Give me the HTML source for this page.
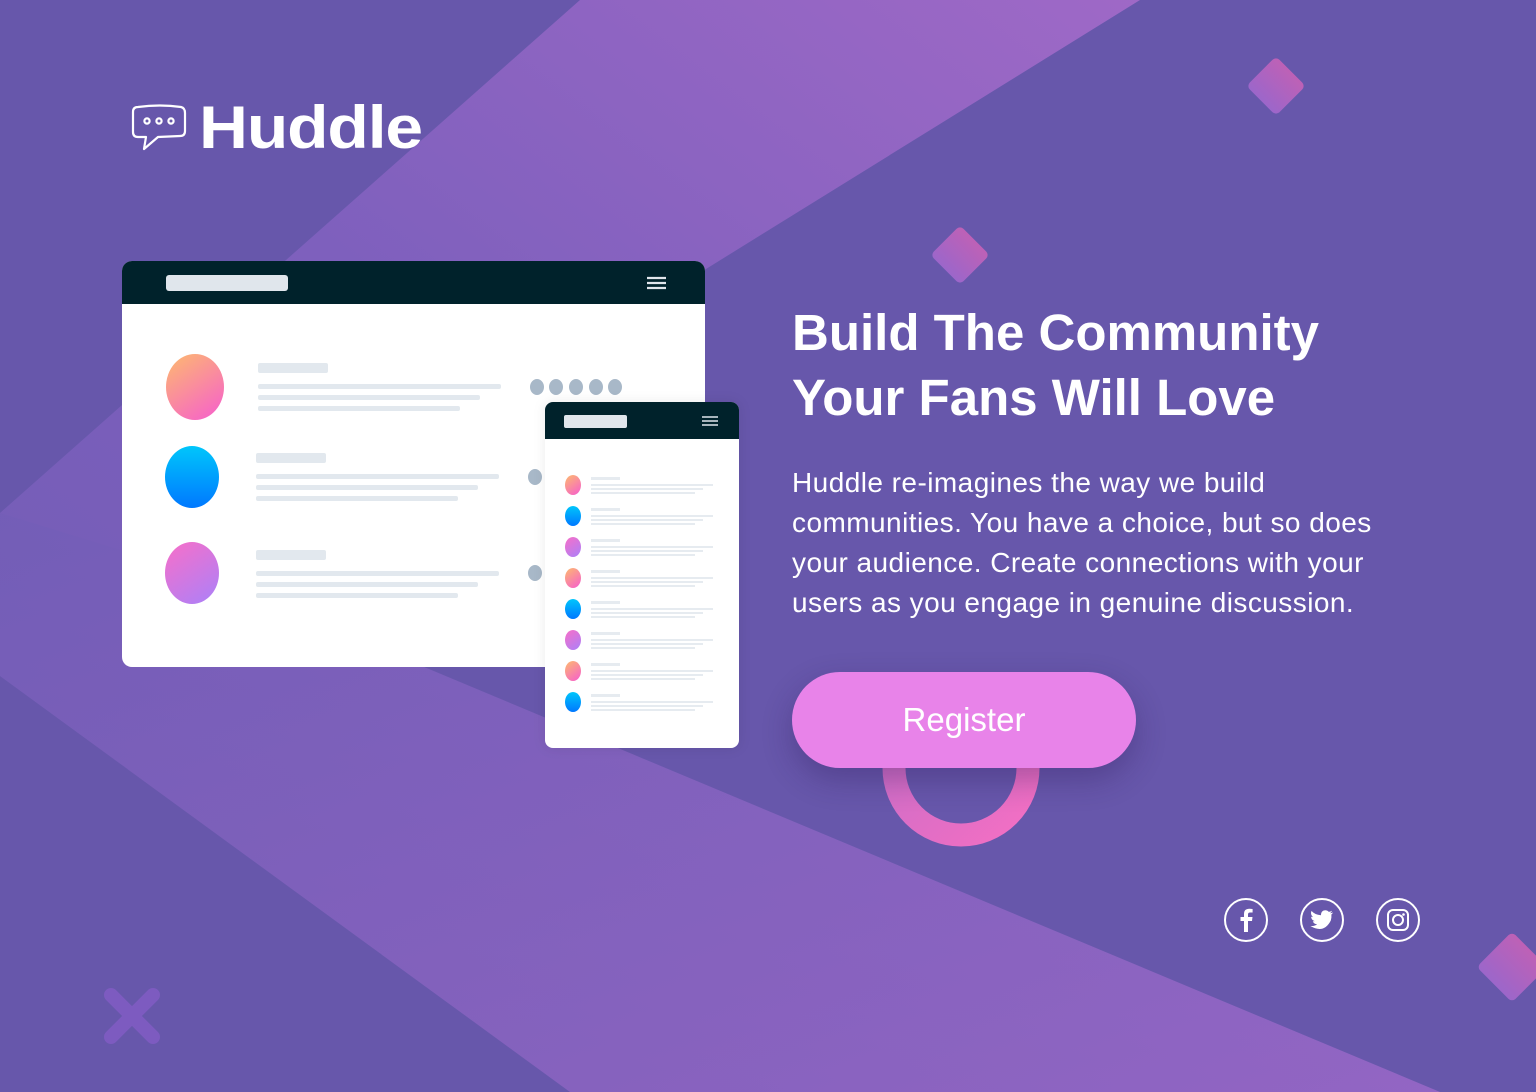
<!DOCTYPE html>
<html><head><meta charset="utf-8"><style>
html,body{margin:0;padding:0;width:1536px;height:1092px;overflow:hidden;background:#6757AB;font-family:"Liberation Sans",sans-serif;}
.abs{position:absolute;}
h1{position:absolute;left:792px;top:300px;margin:0;color:#fff;font-size:51px;line-height:65px;font-weight:bold;letter-spacing:0px;}
p{position:absolute;left:792px;top:463px;width:620px;margin:0;color:#fff;font-size:28px;line-height:40px;letter-spacing:0.45px;}
.btn{position:absolute;left:792px;top:672px;width:344px;height:96px;border-radius:48px;background:#E883E9;color:#fff;font-size:33px;line-height:96px;text-align:center;box-shadow:0 12px 30px rgba(40,20,80,.3);}
</style></head><body>
<svg class="abs" style="left:0;top:0" width="1536" height="1092">
<defs>
<linearGradient id="bg" x1="0" y1="1" x2="1" y2="0">
<stop offset="0" stop-color="#6E5BB3"/><stop offset="0.5" stop-color="#7E60BD"/><stop offset="1" stop-color="#A76BC9"/></linearGradient>
<linearGradient id="bg2" x1="0" y1="0" x2="1" y2="1">
<stop offset="0" stop-color="#715DB6"/><stop offset="1" stop-color="#A069C8"/></linearGradient>
<linearGradient id="dm" x1="0" y1="0" x2="0" y2="1"><stop offset="0" stop-color="#BE61B6"/><stop offset="1" stop-color="#9C66CA"/></linearGradient>
<linearGradient id="rg" x1="0" y1="0" x2="1" y2="1"><stop offset="0" stop-color="#C56DC8"/><stop offset="1" stop-color="#F46FC3"/></linearGradient>
<linearGradient id="a1" x1="0" y1="0" x2="0.6" y2="1"><stop offset="0" stop-color="#FDBA6E"/><stop offset="1" stop-color="#F76BC0"/></linearGradient>
<linearGradient id="a2" x1="0" y1="0" x2="0" y2="1"><stop offset="0" stop-color="#00C6FB"/><stop offset="1" stop-color="#0078FF"/></linearGradient>
<linearGradient id="a3" x1="0" y1="0" x2="0.6" y2="1"><stop offset="0" stop-color="#F86FC8"/><stop offset="1" stop-color="#B67EF2"/></linearGradient>
</defs>
<polygon points="580,0 1140,0 209,577 1440,1092 570,1092 0,676 0,513" fill="url(#bg)"/>
<polygon points="209,577 1440,1092 570,1092 0,676 0,513" fill="url(#bg2)" opacity="0.6"/>
<rect x="1255" y="65" width="42" height="42" rx="5" fill="url(#dm)" transform="rotate(45 1276 86)"/>
<rect x="939" y="234" width="42" height="42" rx="5" fill="url(#dm)" transform="rotate(45 960 255)"/>
<rect x="1487" y="942" width="50" height="50" rx="5" fill="url(#dm)" transform="rotate(45 1512 967)"/>
<path d="M111 995L153 1037M153 995L111 1037" stroke="#7D5BC0" stroke-width="14" stroke-linecap="round"/>
<circle cx="961" cy="768" r="67" fill="none" stroke="url(#rg)" stroke-width="23"/>
<g>
<rect x="122" y="261" width="583" height="406" rx="10" fill="#fff"/>
<path d="M132 261H695A10 10 0 0 1 705 271V304H122V271A10 10 0 0 1 132 261Z" fill="#00222B"/>
<rect x="166" y="275" width="122" height="16" rx="3" fill="#E0E6EC"/>
<path d="M647 278H666M647 283H666M647 288H666" stroke="#E0E6EC" stroke-width="2.2"/>
<ellipse cx="195" cy="387" rx="29" ry="33" fill="url(#a1)"/>
<ellipse cx="192" cy="477" rx="27" ry="31" fill="url(#a2)"/>
<ellipse cx="192" cy="573" rx="27" ry="31" fill="url(#a3)"/>
<g fill="#E2E8EE">
<rect x="258" y="363" width="70" height="10" rx="2"/><rect x="258" y="384" width="243" height="5" rx="2"/><rect x="258" y="395" width="222" height="5" rx="2"/><rect x="258" y="406" width="202" height="5" rx="2"/>
<rect x="256" y="453" width="70" height="10" rx="2"/><rect x="256" y="474" width="243" height="5" rx="2"/><rect x="256" y="485" width="222" height="5" rx="2"/><rect x="256" y="496" width="202" height="5" rx="2"/>
<rect x="256" y="550" width="70" height="10" rx="2"/><rect x="256" y="571" width="243" height="5" rx="2"/><rect x="256" y="582" width="222" height="5" rx="2"/><rect x="256" y="593" width="202" height="5" rx="2"/>
</g>
<g fill="#A8B8C8">
<ellipse cx="537" cy="387" rx="7" ry="8"/><ellipse cx="556" cy="387" rx="7" ry="8"/><ellipse cx="576" cy="387" rx="7" ry="8"/><ellipse cx="596" cy="387" rx="7" ry="8"/><ellipse cx="615" cy="387" rx="7" ry="8"/>
<ellipse cx="535" cy="477" rx="7" ry="8"/><ellipse cx="535" cy="573" rx="7" ry="8"/>
</g>
</g>
<g>
<rect x="545" y="402" width="194" height="346" rx="8" fill="#fff" style="filter:drop-shadow(0 0 6px rgba(0,0,0,.08))"/>
<path d="M553 402H731A8 8 0 0 1 739 410V439H545V410A8 8 0 0 1 553 402Z" fill="#00222B"/>
<rect x="564" y="415" width="63" height="13" rx="2" fill="#E0E6EC"/>
<path d="M702 417H718M702 421H718M702 425H718" stroke="#E0E6EC" stroke-width="1.6"/>
<g fill="#E6EBF0">
<rect x="591" y="477" width="29" height="3"/><rect x="591" y="484" width="122" height="2"/><rect x="591" y="488" width="112" height="2"/><rect x="591" y="492" width="104" height="2"/>
<rect x="591" y="508" width="29" height="3"/><rect x="591" y="515" width="122" height="2"/><rect x="591" y="519" width="112" height="2"/><rect x="591" y="523" width="104" height="2"/>
<rect x="591" y="539" width="29" height="3"/><rect x="591" y="546" width="122" height="2"/><rect x="591" y="550" width="112" height="2"/><rect x="591" y="554" width="104" height="2"/>
<rect x="591" y="570" width="29" height="3"/><rect x="591" y="577" width="122" height="2"/><rect x="591" y="581" width="112" height="2"/><rect x="591" y="585" width="104" height="2"/>
<rect x="591" y="601" width="29" height="3"/><rect x="591" y="608" width="122" height="2"/><rect x="591" y="612" width="112" height="2"/><rect x="591" y="616" width="104" height="2"/>
<rect x="591" y="632" width="29" height="3"/><rect x="591" y="639" width="122" height="2"/><rect x="591" y="643" width="112" height="2"/><rect x="591" y="647" width="104" height="2"/>
<rect x="591" y="663" width="29" height="3"/><rect x="591" y="670" width="122" height="2"/><rect x="591" y="674" width="112" height="2"/><rect x="591" y="678" width="104" height="2"/>
<rect x="591" y="694" width="29" height="3"/><rect x="591" y="701" width="122" height="2"/><rect x="591" y="705" width="112" height="2"/><rect x="591" y="709" width="104" height="2"/>
</g>
<ellipse cx="573" cy="485" rx="8" ry="10" fill="url(#a1)"/>
<ellipse cx="573" cy="516" rx="8" ry="10" fill="url(#a2)"/>
<ellipse cx="573" cy="547" rx="8" ry="10" fill="url(#a3)"/>
<ellipse cx="573" cy="578" rx="8" ry="10" fill="url(#a1)"/>
<ellipse cx="573" cy="609" rx="8" ry="10" fill="url(#a2)"/>
<ellipse cx="573" cy="640" rx="8" ry="10" fill="url(#a3)"/>
<ellipse cx="573" cy="671" rx="8" ry="10" fill="url(#a1)"/>
<ellipse cx="573" cy="702" rx="8" ry="10" fill="url(#a2)"/>
</g>
<g fill="none" stroke="#fff" stroke-width="2.2" stroke-linejoin="round">
<path d="M138 107Q160 104 181 107Q185 108 185 113V131Q185 136 180 136L158 137L144 149L146 137H138Q133 137 133 132V112Q133 107 138 107Z"/>
<circle cx="147" cy="121" r="2.6"/><circle cx="159" cy="121" r="2.6"/><circle cx="171" cy="121" r="2.6"/>
</g>
<g fill="none" stroke="#fff" stroke-width="2">
<circle cx="1246" cy="920" r="21"/><circle cx="1322" cy="920" r="21"/><circle cx="1398" cy="920" r="21"/>
<rect x="1388" y="910" width="20" height="20" rx="5"/><circle cx="1398" cy="920" r="5"/>
</g>
<circle cx="1403.5" cy="914.5" r="1.3" fill="#fff"/>
<path d="M1248 932V921H1252L1252.5 917H1248V914.5Q1248 912.5 1250 912.5H1252.6V909Q1251 908.8 1249.5 908.8Q1244 908.8 1244 914V917H1240.5V921H1244V932Z" fill="#fff"/>
<path d="M1333 912.5Q1331.5 913.2 1330 913.3Q1331.6 912.3 1332 910.7Q1330.5 911.6 1328.8 911.9Q1327.3 910.3 1325.2 910.3Q1321 910.5 1320.9 915.2Q1314.7 914.8 1311.5 910.9Q1310 914.3 1312.9 917.1Q1311.9 917.1 1311.1 916.6Q1311.2 920 1314.7 921.1Q1313.6 921.4 1312.8 921.1Q1313.7 924 1317.1 924.2Q1314.2 926.4 1310.4 926Q1324 934 1330.8 920.5Q1331.7 917.5 1331.4 914.5Q1332.5 913.7 1333 912.5Z" fill="#fff"/>
</svg>
<div class="abs" style="left:199px;top:92px;color:#fff;font-size:60px;font-weight:bold;letter-spacing:-1px;line-height:72px;transform:scaleX(1.13);transform-origin:left center;">Huddle</div>
<h1>Build The Community<br>Your Fans Will Love</h1>
<p>Huddle re-imagines the way we build communities. You have a choice, but so does your audience. Create connections with your users as you engage in genuine discussion.</p>
<div class="btn">Register</div>
</body></html>
